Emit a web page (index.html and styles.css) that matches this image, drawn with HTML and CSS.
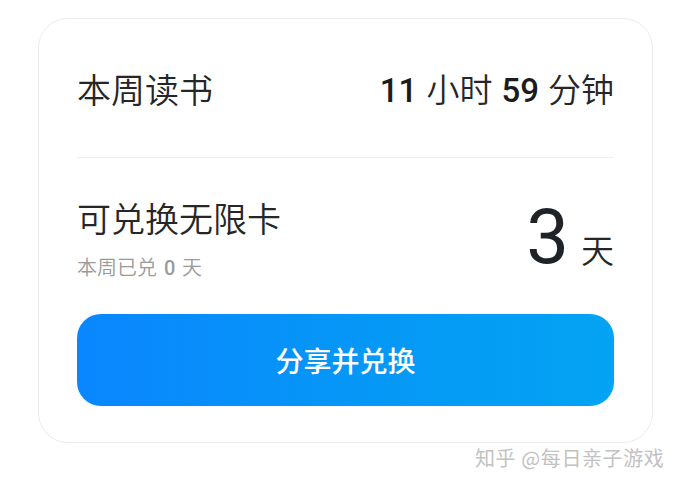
FILE: index.html
```html
<!DOCTYPE html>
<html lang="zh-CN">
<head>
<meta charset="utf-8">
<title>本周读书</title>
<link rel="stylesheet" href="styles.css">
</head>
<body>
<div class="page">
  <section class="card">
    <div class="row-top">
      <div class="label">本周读书</div>
      <div class="duration"><b>11</b> 小时 <b>59</b> 分钟</div>
    </div>
    <div class="divider"></div>
    <div class="row-card">
      <div class="info">
        <div class="label">可兑换无限卡</div>
        <div class="sub">本周已兑 <b>0</b> 天</div>
      </div>
      <div class="days"><span class="num">3</span><span class="unit">天</span></div>
    </div>
    <button class="btn">分享并兑换</button>
  </section>
  <div class="watermark">知乎 @每日亲子游戏</div>
</div>
</body>
</html>
```

FILE: styles.css
```css
* { box-sizing: border-box; }
html, body { margin: 0; padding: 0; background: #fff; }
body {
  font-family: "Roboto", "Noto Sans CJK SC", sans-serif;
  color: #222;
}
.page {
  position: relative;
  width: 680px;
  height: 485px;
  padding: 18px 0 0 38px;
}
.card {
  width: 615px;
  border: 1px solid #ececec;
  border-radius: 30px;
  padding: 40px 38px 36px 38px;
  display: flex;
  flex-direction: column;
}
.row-top {
  height: 64px;
  display: flex;
  align-items: center;
  justify-content: space-between;
}
.label {
  font-size: 34px;
  line-height: 40px;
  font-weight: 350;
  color: #262626;
}
.duration {
  font-size: 33px;
  line-height: 40px;
  font-weight: 350;
  color: #262626;
  word-spacing: 1px;
}
.duration b { font-weight: 500; color: #1c1c1c; }
.divider {
  margin-top: 34px;
  height: 1px;
  background: #f0f0f0;
}
.row-card {
  margin-top: 42px;
  display: flex;
  justify-content: space-between;
  align-items: flex-start;
}
.info { display: flex; flex-direction: column; gap: 14px; }
.sub {
  font-size: 20px;
  line-height: 28px;
  font-weight: 350;
  color: #9a9a9a;
  word-spacing: 2px;
}
.sub b { font-weight: 500; color: #9a9a9a; }
.days {
  display: flex;
  align-items: baseline;
  margin-top: -1px;
}
.num {
  font-size: 76px;
  line-height: 76px;
  font-weight: 400;
  color: #1f2328;
}
.unit {
  font-size: 33px;
  font-weight: 350;
  margin-left: 12px;
  color: #262626;
}
.btn {
  margin-top: 32px;
  height: 92px;
  width: 100%;
  border: none;
  border-radius: 24px;
  background: linear-gradient(90deg, #0a86fe 0%, #0598f6 55%, #04a3f3 100%);
  color: #fff;
  font-family: "Noto Sans CJK SC", sans-serif;
  font-size: 28px;
  font-weight: 500;
  padding: 0;
}
.watermark {
  position: absolute;
  left: 475px;
  top: 445px;
  font-family: "Noto Sans CJK SC", sans-serif;
  font-size: 20px;
  line-height: 26px;
  letter-spacing: 0.6px;
  color: #c2c2c2;
  white-space: nowrap;
}
```
